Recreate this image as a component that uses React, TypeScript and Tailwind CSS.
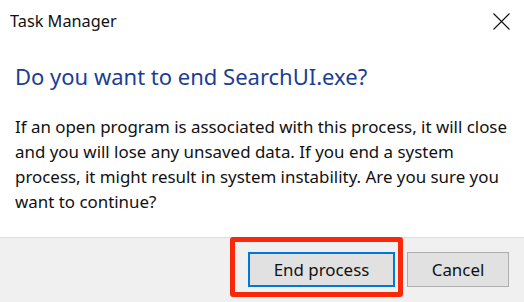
import React from "react";

const FONT = { fontFamily: '"Noto Sans", "Open Sans", sans-serif' };

export default function App() {
  return (
    <div className="w-[524px] h-[302px] bg-white flex flex-col overflow-hidden text-black" style={FONT}>
      {/* title bar */}
      <div className="h-[44px] flex items-start justify-between pl-[10px] pr-[14px]">
        <span className="text-[16.3px] leading-[22px] mt-[10px] text-[#111]">Task Manager</span>
        <svg className="mt-[13px]" width="17" height="17" viewBox="0 0 17 17">
          <path d="M0.5 0.5 L16.5 16.5 M16.5 0.5 L0.5 16.5" stroke="#111" strokeWidth="1.1" fill="none" />
        </svg>
      </div>

      {/* body */}
      <div className="flex-1 px-[15px]">
        <h1 className="text-[22px] leading-[30px] mt-[17px] text-[#1b3d95] font-normal whitespace-nowrap">
          Do you want to end SearchUI.exe?
        </h1>
        <div className="mt-[23px] text-[16.9px] leading-[25px] text-[#111]">
          <div className="whitespace-nowrap">If an open program is associated with this process, it will close</div>
          <div className="whitespace-nowrap">and you will lose any unsaved data. If you end a system</div>
          <div className="whitespace-nowrap">process, it might result in system instability. Are you sure you</div>
          <div className="whitespace-nowrap">want to continue?</div>
        </div>
      </div>

      {/* footer */}
      <div className="h-[65px] bg-[#f0f0f0] border-t border-[#dfdfdf] flex justify-end items-start pt-[14px] pr-[15px] gap-[12px]">
        <div className="relative">
          <button className="w-[147px] h-[35px] bg-[#e1e1e1] border-2 border-[#0078d7] text-[16.9px] text-[#111]">
            End process
          </button>
          <div className="absolute left-[-18px] top-[-15px] w-[173px] h-[60px] border-[5px] border-[#f8290b] rounded-[3px] pointer-events-none" />
        </div>
        <button className="w-[102px] h-[35px] bg-[#e1e1e1] border border-[#adadad] text-[16.9px] text-[#111]">
          Cancel
        </button>
      </div>
    </div>
  );
}
